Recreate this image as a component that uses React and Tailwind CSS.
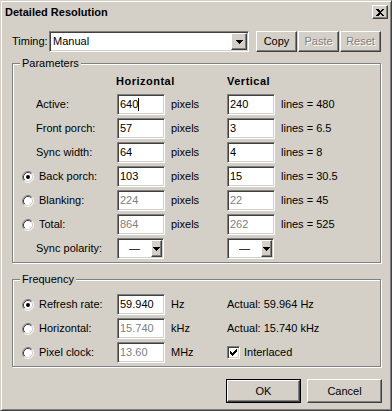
import React from 'react';

const sunken =
  'border border-t-[#808080] border-l-[#808080] border-r-white border-b-white shadow-[inset_1px_1px_0_#404040,inset_-1px_-1px_0_#d4d0c8]';
const raised =
  'border border-t-white border-l-white border-r-[#404040] border-b-[#404040] shadow-[inset_-1px_-1px_0_#808080]';
const group =
  'relative border border-[#808080] shadow-[inset_1px_1px_0_#fff,1px_1px_0_#fff]';

function Arrow() {
  return (
    <svg width="7" height="4" viewBox="0 0 7 4" shapeRendering="crispEdges">
      <path d="M0 0h7v1h-1v1h-1v1h-1v1h-1v-1h-1v-1h-1v-1h-1z" fill="#000" />
    </svg>
  );
}

function Combo({ value, width, btn, center }) {
  return (
    <div className={`${width} h-[21px] bg-white ${sunken} flex items-center`}>
      <span className={center ? 'flex-1 text-center' : 'flex-1 pl-[3px]'}>{value}</span>
      <div className={`${btn} h-[17px] mr-[1px] bg-[#d4d0c8] ${raised} flex items-center justify-center`}>
        <Arrow />
      </div>
    </div>
  );
}

function Field({ value, disabled, caret }) {
  return (
    <div
      className={`w-[48px] h-[21px] bg-white ${sunken} flex items-center px-[2px] ${
        disabled ? 'text-[#808080]' : 'text-black'
      }`}
    >
      <span>{value}</span>
      {caret && <span className="w-px h-[13px] bg-black" />}
    </div>
  );
}

function Radio({ checked }) {
  return (
    <svg width="12" height="12" viewBox="0 0 12 12">
      <circle cx="6" cy="6" r="4.5" fill="#fff" />
      <path d="M2.11 9.89A5.5 5.5 0 0 1 9.89 2.11" fill="none" stroke="#808080" />
      <path d="M9.89 2.11A5.5 5.5 0 0 1 2.11 9.89" fill="none" stroke="#fff" />
      <path d="M2.82 9.18A4.5 4.5 0 0 1 9.18 2.82" fill="none" stroke="#404040" />
      <path d="M9.18 2.82A4.5 4.5 0 0 1 2.82 9.18" fill="none" stroke="#d4d0c8" />
      {checked && <circle cx="6" cy="6" r="2" fill="#000" />}
    </svg>
  );
}

function Check() {
  const cols = [2, 3, 4, 3, 2, 1, 0];
  return (
    <div className={`w-[13px] h-[13px] bg-white ${sunken} flex items-center justify-center`}>
      <svg width="7" height="7" viewBox="0 0 7 7" shapeRendering="crispEdges">
        {cols.map((y, x) => (
          <rect key={x} x={x} y={y} width="1" height="3" fill="#000" />
        ))}
      </svg>
    </div>
  );
}

function Label({ text, radio }) {
  return (
    <div className="w-[104px] flex items-center">
      {radio ? (
        <>
          <span className="ml-[9px] flex">
            <Radio checked={radio === 'on'} />
          </span>
          <span className="ml-[5px]">{text}</span>
        </>
      ) : (
        <span className="ml-[23px]">{text}</span>
      )}
    </div>
  );
}

function ParamRow({ label, radio, h, v, lines, hDis, vDis, caret }) {
  return (
    <div className="flex items-center h-[21px]">
      <Label text={label} radio={radio} />
      <Field value={h} disabled={hDis} caret={caret} />
      <div className="w-[62px] pl-[6px]">pixels</div>
      <Field value={v} disabled={vDis} />
      <div className="pl-[6px]">{lines}</div>
    </div>
  );
}

function Button({ children, disabled, size }) {
  return (
    <div
      className={`${size} bg-[#d4d0c8] ${raised} flex items-center justify-center ${
        disabled ? 'text-[#808080] [text-shadow:1px_1px_0_#fff]' : 'text-black'
      }`}
    >
      {children}
    </div>
  );
}

const params = [
  { label: 'Active:', h: '640', v: '240', lines: 'lines = 480', caret: true },
  { label: 'Front porch:', h: '57', v: '3', lines: 'lines = 6.5' },
  { label: 'Sync width:', h: '64', v: '4', lines: 'lines = 8' },
  { label: 'Back porch:', radio: 'on', h: '103', v: '15', lines: 'lines = 30.5' },
  { label: 'Blanking:', radio: 'off', h: '224', v: '22', lines: 'lines = 45', hDis: true, vDis: true },
  { label: 'Total:', radio: 'off', h: '864', v: '262', lines: 'lines = 525', hDis: true, vDis: true },
];

export default function App() {
  return (
    <div className="w-[392px] h-[411px] bg-[#d4d0c8] text-black text-[11px] leading-[13px] font-['Liberation_Sans',Arial,sans-serif] border border-t-[#d4d0c8] border-l-[#d4d0c8] border-r-[#404040] border-b-[#404040] shadow-[inset_1px_1px_0_#fff,inset_-1px_-1px_0_#808080] flex flex-col">
      {/* Title bar */}
      <div className="h-[18px] mt-[2px] mx-[2px] pl-[2px] pr-[1px] flex items-center justify-between">
        <span className="font-bold">Detailed Resolution</span>
        <div className={`w-[16px] h-[14px] bg-[#d4d0c8] ${raised} flex items-center justify-center`}>
          <svg width="8" height="7" viewBox="0 0 8 7" shapeRendering="crispEdges">
            <path d="M0 0h2l2 2 2-2h2l-3 3.5 3 3.5h-2l-2-2-2 2h-2l3-3.5z" fill="#000" />
          </svg>
        </div>
      </div>

      {/* Timing */}
      <div className="mt-[10px] ml-[11px] flex items-center">
        <span className="w-[37px]">Timing:</span>
        <Combo value="Manual" width="w-[200px]" btn="w-[16px]" />
        <div className="ml-[7px] flex gap-[1px]">
          <Button size="w-[41px] h-[21px]">Copy</Button>
          <Button size="w-[41px] h-[21px]" disabled>
            Paste
          </Button>
          <Button size="w-[41px] h-[21px]" disabled>
            Reset
          </Button>
        </div>
      </div>

      {/* Parameters */}
      <div className={`${group} mt-[11px] ml-[11px] w-[369px] h-[200px] pt-[10px]`}>
        <span className="absolute -top-[7px] left-[7px] px-[2px] bg-[#d4d0c8]">Parameters</span>
        <div className="flex items-center h-[14px] mb-[6px] font-bold tracking-[0.5px]">
          <span className="w-[103px]" />
          <span className="w-[111px]">Horizontal</span>
          <span>Vertical</span>
        </div>
        <div className="flex flex-col gap-[3px]">
          {params.map((p) => (
            <ParamRow key={p.label} {...p} />
          ))}
          <div className="flex items-center h-[21px]">
            <Label text="Sync polarity:" />
            <Combo value="—" width="w-[47px]" btn="w-[11px]" center />
            <div className="w-[63px]" />
            <Combo value="—" width="w-[47px]" btn="w-[11px]" center />
          </div>
        </div>
      </div>

      {/* Frequency */}
      <div className={`${group} mt-[16px] ml-[11px] w-[369px] h-[88px] pt-[14px]`}>
        <span className="absolute -top-[7px] left-[7px] px-[2px] bg-[#d4d0c8]">Frequency</span>
        <div className="flex flex-col gap-[3px]">
          <div className="flex items-center h-[21px]">
            <Label text="Refresh rate:" radio="on" />
            <Field value="59.940" />
            <div className="w-[62px] pl-[6px]">Hz</div>
            <span>Actual: 59.964 Hz</span>
          </div>
          <div className="flex items-center h-[21px]">
            <Label text="Horizontal:" radio="off" />
            <Field value="15.740" disabled />
            <div className="w-[62px] pl-[6px]">kHz</div>
            <span>Actual: 15.740 kHz</span>
          </div>
          <div className="flex items-center h-[21px]">
            <Label text="Pixel clock:" radio="off" />
            <Field value="13.60" disabled />
            <div className="w-[62px] pl-[6px]">MHz</div>
            <Check />
            <span className="ml-[4px]">Interlaced</span>
          </div>
        </div>
      </div>

      {/* Buttons */}
      <div className="mt-[12px] mr-[9px] flex justify-end gap-[6px]">
        <div className="border border-black">
          <Button size="w-[73px] h-[22px]">OK</Button>
        </div>
        <Button size="w-[75px] h-[24px]">Cancel</Button>
      </div>
    </div>
  );
}
